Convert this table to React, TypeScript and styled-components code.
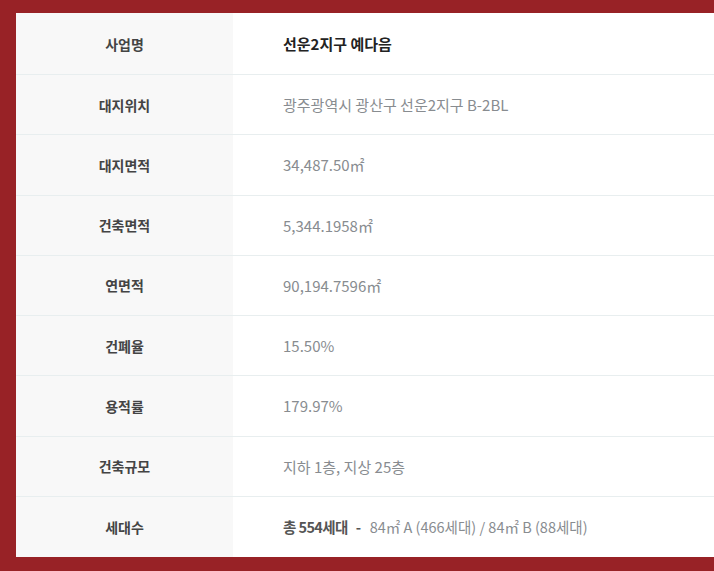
import React from "react";
import styled, { createGlobalStyle } from "styled-components";

const GlobalStyle = createGlobalStyle`
    html, body {
        margin: 0;
        padding: 0;
        background: #982226;
    }
    body {
        font-family: "Noto Sans CJK KR", "Noto Sans", sans-serif;
    }
`;

const Page = styled.div`
    width: 714px;
    height: 571px;
    padding: 13px 0 14px 16px;
    box-sizing: border-box;
`;

const Table = styled.div`
    height: 544px;
    background: #fff;
    display: grid;
    grid-template-columns: 217px 1fr;
    grid-template-rows: 62px repeat(8, 1fr);
`;

const Label = styled.div<{ $last?: boolean }>`
    background: #f8f8f8;
    display: flex;
    align-items: center;
    justify-content: center;
    font-size: 14px;
    font-weight: 700;
    color: #444;
    border-bottom: ${(p) => (p.$last ? "none" : "1px solid #e8eeef")};
`;

const Value = styled.div<{ $bold?: boolean; $last?: boolean; $size?: number }>`
    display: flex;
    align-items: center;
    padding-left: 50px;
    font-size: ${(p) => p.$size ?? 15}px;
    font-weight: ${(p) => (p.$bold ? 700 : 400)};
    color: ${(p) => (p.$bold ? "#222" : "#888c90")};
    white-space: pre;
    border-bottom: ${(p) => (p.$last ? "none" : "1px solid #e8eeef")};
`;

const Strong = styled.span`
    font-weight: 700;
    color: #555;
    letter-spacing: -0.6px;
    margin-right: 9px;
`;

const rows: { label: string; value: React.ReactNode; bold?: boolean; size?: number }[] = [
    { label: "사업명", value: "선운2지구 예다음", bold: true },
    { label: "대지위치", value: "광주광역시 광산구 선운2지구 B-2BL" },
    { label: "대지면적", value: "34,487.50㎡" },
    { label: "건축면적", value: "5,344.1958㎡" },
    { label: "연면적", value: "90,194.7596㎡" },
    { label: "건폐율", value: "15.50%" },
    { label: "용적률", value: "179.97%" },
    { label: "건축규모", value: "지하 1층, 지상 25층" },
    {
        label: "세대수",
        size: 14.5,
        value: (
            <>
                <Strong>총 554세대   -</Strong>
                84㎡ A (466세대) / 84㎡ B (88세대)
            </>
        ),
    },
];

const App: React.FC = () => {
    return (
        <>
            <GlobalStyle />
            <Page>
                <Table>
                    {rows.map((r, i) => (
                        <React.Fragment key={r.label}>
                            <Label $last={i === rows.length - 1}>{r.label}</Label>
                            <Value $bold={r.bold} $size={r.size} $last={i === rows.length - 1}>
                                {r.value}
                            </Value>
                        </React.Fragment>
                    ))}
                </Table>
            </Page>
        </>
    );
};

export default App;
